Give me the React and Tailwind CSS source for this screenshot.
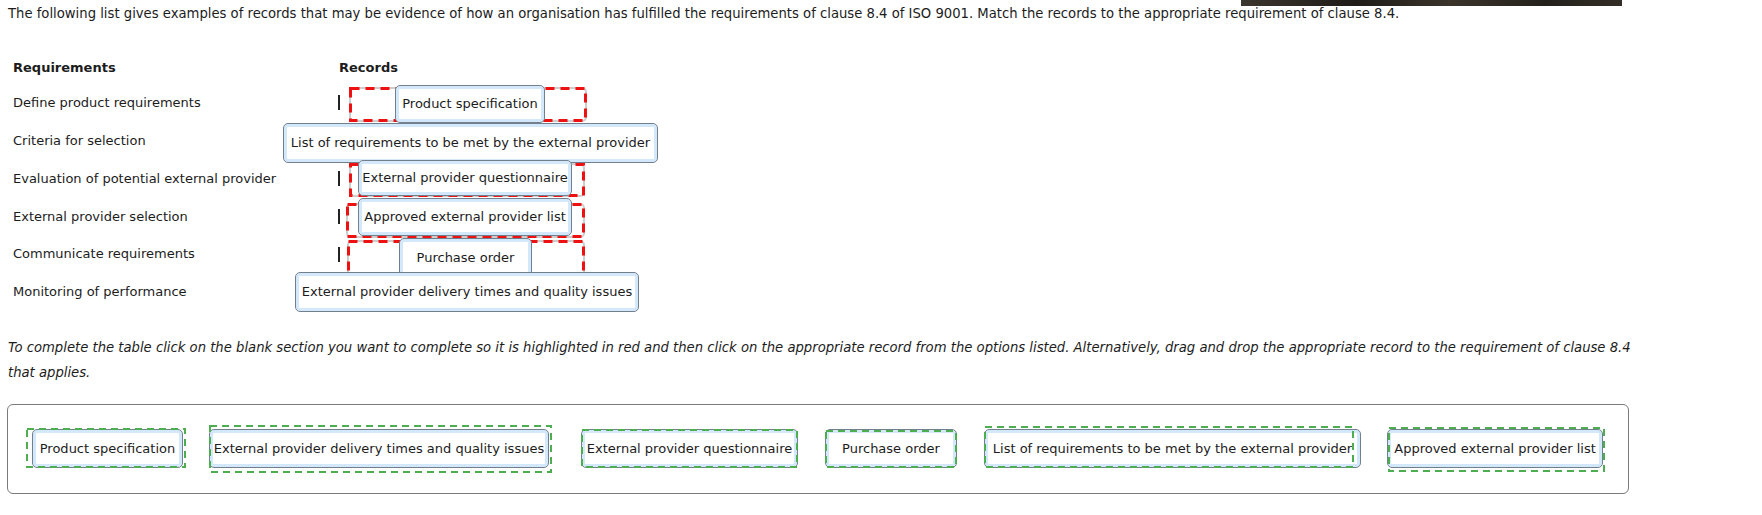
import React from "react";

const FONT = { fontFamily: '"DejaVu Sans", Verdana, sans-serif' };

const BTN =
  "flex items-center justify-center whitespace-nowrap rounded-[5px] border border-[#72808e] bg-white shadow-[inset_0_0_0_3px_#d3e8fa] text-[13px] text-[#1c1c1c]";

function Dashes({ color, dash, width }) {
  return (
    <svg className="pointer-events-none absolute inset-0 h-full w-full overflow-visible">
      <rect
        x={width / 2}
        y={width / 2}
        className={width === 3 ? "w-[calc(100%-3px)] h-[calc(100%-3px)]" : "w-[calc(100%-2px)] h-[calc(100%-2px)]"}
        fill="none"
        stroke={color}
        strokeWidth={width}
        strokeDasharray={dash}
      />
    </svg>
  );
}

function Drop({ className = "", children }) {
  return (
    <div className={"relative shrink-0 " + className}>
      <div className="absolute inset-0 rounded-[5px] border-2 border-[#cdcdcd]" />
      <Dashes color="#ee1111" dash="9 6" width={3} />
      {children}
    </div>
  );
}

function Bar() {
  return <div className="w-[2px] h-[15px] shrink-0 bg-[#222]" />;
}

function Row({ label, children }) {
  return (
    <div className="flex h-[37.8px] items-center text-[13px] text-[#1c1c1c]">
      <div className="w-[338px] shrink-0 pl-[13px] whitespace-nowrap">{label}</div>
      <div className="flex items-center">{children}</div>
    </div>
  );
}

function Item({ label, className, outline }) {
  return (
    <div className="relative shrink-0">
      <div className={BTN + " h-[39px] " + className}>{label}</div>
      <div className={"pointer-events-none absolute " + outline}>
        <Dashes color="#4cae4f" dash="7 5" width={2} />
      </div>
    </div>
  );
}

export default function App() {
  return (
    <div className="w-[1762px] h-[515px] bg-white overflow-hidden text-[#1c1c1c]" style={FONT}>
      <div className="ml-[1241px] w-[381px] h-[6px] bg-[linear-gradient(90deg,#3b362e,#1f1c18_30%,#3a342b_55%,#24211c_80%,#332e27)]" />
      <p className="pl-[8px] text-[13.2px] leading-[16px] whitespace-nowrap">
        The following list gives examples of records that may be evidence of how an organisation has fulfilled the requirements of clause 8.4 of ISO 9001. Match the records to the appropriate requirement of clause 8.4.
      </p>

      <div className="mt-[38px] flex text-[13px] leading-[16px] font-bold">
        <div className="w-[339px] pl-[13px]">Requirements</div>
        <div>Records</div>
      </div>

      <div className="mt-[8px]">
        <Row label="Define product requirements">
          <Bar />
          <Drop className="ml-[9px] mt-[3px] w-[238px] h-[35px]">
            <div className={BTN + " absolute left-[46px] top-[-2px] w-[150px] h-[38px]"}>Product specification</div>
          </Drop>
        </Row>
        <Row label="Criteria for selection">
          <div className={BTN + " relative -ml-[55px] mt-[4px] w-[375px] h-[40px]"}>
            List of requirements to be met by the external provider
          </div>
        </Row>
        <Row label="Evaluation of potential external provider">
          <Bar />
          <Drop className="ml-[9px] mt-[3px] w-[236px] h-[34px]">
            <div className={BTN + " absolute left-[9px] top-[-3px] w-[214px] h-[36px]"}>External provider questionnaire</div>
          </Drop>
        </Row>
        <Row label="External provider selection">
          <Bar />
          <Drop className="ml-[6px] mt-[8px] w-[239px] h-[35px]">
            <div className={BTN + " absolute left-[12px] top-[-5px] w-[214px] h-[38px]"}>Approved external provider list</div>
          </Drop>
        </Row>
        <Row label="Communicate requirements">
          <Bar />
          <Drop className="ml-[7px] mt-[16px] w-[238px] h-[45px]">
            <div className={BTN + " absolute left-[52px] top-[-2px] w-[133px] h-[40px]"}>Purchase order</div>
          </Drop>
        </Row>
        <Row label="Monitoring of performance">
          <div className={BTN + " relative -ml-[43px] w-[344px] h-[40px]"}>
            External provider delivery times and quality issues
          </div>
        </Row>
      </div>

      <p className="mt-[24px] pl-[8px] text-[13.2px] leading-[25px] italic whitespace-nowrap">
        To complete the table click on the blank section you want to complete so it is highlighted in red and then click on the appropriate record from the options listed. Alternatively, drag and drop the appropriate record to the requirement of clause 8.4
        <br />
        that applies.
      </p>

      <div className="mt-[19px] ml-[7px] w-[1622px] h-[90px] rounded-[6px] border border-[#7a7a7a] flex items-center pl-[24px]">
        <Item label="Product specification" className="w-[151px]" outline="left-[-6px] top-[-1px] w-[160px] h-[40px]" />
        <div className="ml-[26px]">
          <Item label="External provider delivery times and quality issues" className="w-[340px]" outline="left-[0px] top-[-4px] w-[343px] h-[48px]" />
        </div>
        <div className="ml-[32px]">
          <Item label="External provider questionnaire" className="w-[217px]" outline="left-[0px] top-[0px] w-[217px] h-[39px]" />
        </div>
        <div className="ml-[27px]">
          <Item label="Purchase order" className="w-[132px]" outline="left-[0px] top-[1px] w-[132px] h-[38px]" />
        </div>
        <div className="ml-[27px]">
          <Item label="List of requirements to be met by the external provider" className="w-[377px]" outline="left-[0px] top-[-3px] w-[370px] h-[42px]" />
        </div>
        <div className="ml-[26px]">
          <Item label="Approved external provider list" className="w-[216px]" outline="left-[1px] top-[-2px] w-[217px] h-[45px]" />
        </div>
      </div>
    </div>
  );
}
